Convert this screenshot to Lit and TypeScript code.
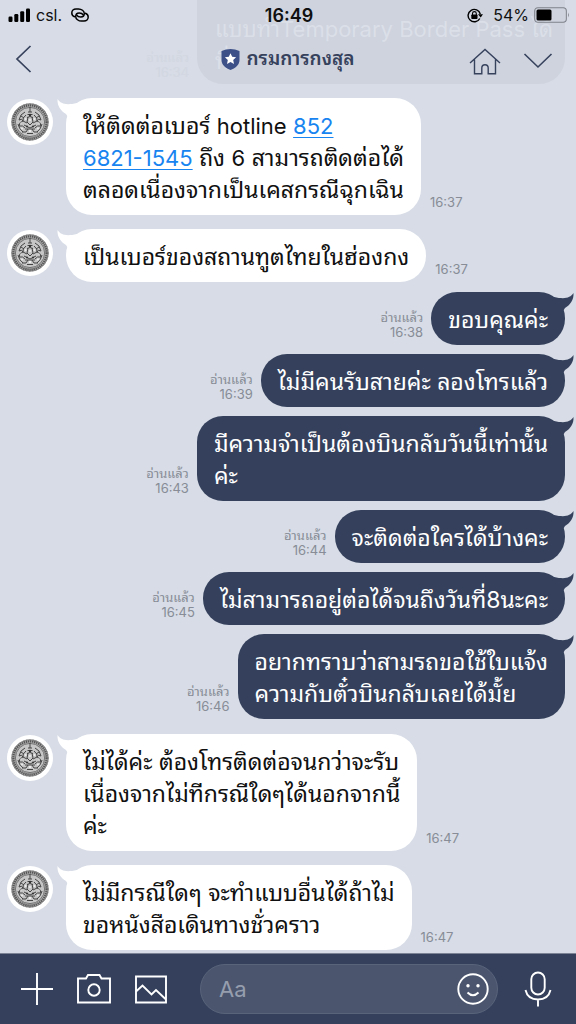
import { LitElement, html, css, nothing } from "lit";
import { customElement, property } from "lit/decorators.js";

interface Message {
  from: "them" | "me";
  lines: unknown[];
  time: string;
}

const phone = html`<a class="phone latin" href="tel:85268211545">852<br />6821-1545</a>`;

const groups: Message[][] = [
  [
    { from: "them", time: "16:37", lines: [html`ให้ติดต่อเบอร์ <span class="latin">hotline</span> ${phone} ถึง <span class="latin">6</span> สามารถติดต่อได้`, "ตลอดเนื่องจากเป็นเคสกรณีฉุกเฉิน"] },
    { from: "them", time: "16:37", lines: ["เป็นเบอร์ของสถานทูตไทยในฮ่องกง"] },
  ],
  [
    { from: "me", time: "16:38", lines: ["ขอบคุณค่ะ"] },
    { from: "me", time: "16:39", lines: ["ไม่มีคนรับสายค่ะ ลองโทรแล้ว"] },
    { from: "me", time: "16:43", lines: ["มีความจำเป็นต้องบินกลับวันนี้เท่านั้น", "ค่ะ"] },
    { from: "me", time: "16:44", lines: ["จะติดต่อใครได้บ้างคะ"] },
    { from: "me", time: "16:45", lines: ["ไม่สามารถอยู่ต่อได้จนถึงวันที่8นะคะ"] },
    { from: "me", time: "16:46", lines: ["อยากทราบว่าสามรถขอใช้ใบแจ้ง", "ความกับตั๋วบินกลับเลยได้มั้ย"] },
  ],
  [
    { from: "them", time: "16:47", lines: ["ไม่ได้ค่ะ ต้องโทรติดต่อจนกว่าจะรับ", "เนื่องจากไม่ทีกรณีใดๆได้นอกจากนี้", "ค่ะ"] },
    { from: "them", time: "16:47", lines: ["ไม่มีกรณีใดๆ จะทำแบบอื่นได้ถ้าไม่", "ขอหนังสือเดินทางชั่วคราว"] },
  ],
];

const emblem = html`<svg viewBox="0 0 46 46" width="46" height="46" role="img" aria-label="กรมการกงสุล">
  <circle cx="23" cy="23" r="23" fill="#fff" />
  <circle cx="23" cy="23" r="18.5" fill="#a9a9a9" />
  <circle cx="23" cy="23" r="18.2" fill="none" stroke="#5a5a5a" stroke-width="1" stroke-dasharray="1 .5" />
  <circle cx="23" cy="23" r="16.6" fill="none" stroke="#555" stroke-width="2.2" stroke-dasharray="1.3 0.8" />
  <circle cx="23" cy="23" r="14.6" fill="#c6c6c6" stroke="#666" stroke-width=".8" />
  <g fill="none" stroke="#444" stroke-width="1">
    <path d="M23 8v5M21 13h4M20.500 15.500h5M20 18.500q3-2 6 0M21 18l-1 5 3 3 3-3-1-5" />
    <path d="M18 13q-5 2-6 8 3-2 4 1-4 1-4 5 4-1 6 2M28 13q5 2 6 8-3-2-4 1 4 1 4 5-4-1-6 2" />
    <path d="M19 16q-4 3-3 6l4 2M27 16q4 3 3 6l-4 2M17 26l6 3 6-3M18 30h10M15 33h4l2-3M31 33h-4l-2-3M20 34.500h6" />
    <path d="M11 25q1 5 5 8M35 25q-1 5-5 8M14 17l3 2M32 17l-3 2" />
  </g>
  <g fill="#eee">
    <circle cx="18.500" cy="20" r="1" /><circle cx="27.500" cy="20" r="1" />
    <circle cx="23" cy="32" r="1.200" /><circle cx="15" cy="29.500" r=".9" /><circle cx="31" cy="29.500" r=".9" />
    <circle cx="23" cy="21" r="1" /><circle cx="14" cy="24" r=".7" /><circle cx="32" cy="24" r=".7" />
  </g>
  <g fill="#333">
    <circle cx="20" cy="27.500" r="1" /><circle cx="26" cy="27.500" r="1" /><circle cx="23" cy="16" r="1.200" />
  </g>
</svg>`;

@customElement("chat-message")
class ChatMessage extends LitElement {
  @property({ attribute: false }) message!: Message;

  static styles = css`
    :host { display: block; }
    .row { display: flex; align-items: flex-end; }
    .row.me { flex-direction: row-reverse; padding-right: 11px; gap: 8px; }
    .row.them { padding-left: 7px; gap: 9px; }
    .avatar { align-self: flex-start; margin: 0 4px 0 0; padding-top: 1px; height: 46px; }
    .avatar svg { display: block; }
    .bubble {
      position: relative; isolation: isolate; margin: 0; border-radius: 26px;
      font-size: 23px; line-height: 32px; white-space: nowrap;
    }
    .latin { font-size: 22px; line-height: 1; }
    .them .bubble { background: #fff; color: #101010; padding: 12px 17px 9px; }
    .me .bubble { background: #35415c; color: #fff; padding: 12px 17px 9px; }
    .tail { position: absolute; top: 0; z-index: -1; }
    .them .tail { left: -9px; fill: #fff; }
    .me .tail { right: -9px; fill: #35415c; }
    .phone { color: #1784f0; text-decoration: underline; text-decoration-thickness: 1px; text-underline-offset: 3px; }
    .meta { color: #878c96; font-size: 13px; line-height: 15px; padding-bottom: 5px; }
    .me .meta { text-align: right; }
    .read { display: block; }
  `;

  render() {
    const { from, lines, time } = this.message;
    return html`<div class="row ${from}">
      ${from === "them" ? html`<div class="avatar">${emblem}</div>` : nothing}
      <p class="bubble">
        ${from === "them"
          ? html`<svg class="tail" width="34" height="24" viewBox="0 0 34 24"><path d="M0.500 1C4 6 9 7.500 20 5L24 14L14 24L9 16C4 13 0 8 0.500 1Z" /></svg>`
          : html`<svg class="tail" width="34" height="24" viewBox="0 0 34 24"><path d="M33.500 1C30 6 25 7.500 14 5L10 14L20 24L25 16C30 13 34 8 33.500 1Z" /></svg>`}
        ${lines.map((line, i) => html`${i ? html`<br />` : nothing}${line}`)}
      </p>
      <div class="meta">
        ${from === "me" ? html`<span class="read">อ่านแล้ว</span>` : nothing}
        <time>${time}</time>
      </div>
    </div>`;
  }
}

@customElement("app-root")
class AppRoot extends LitElement {
  static styles = css`
    :host {
      display: flex; flex-direction: column; height: 100vh; overflow: hidden; position: relative;
      background: #d7dce6; color: #101010;
      font-family: Inter, "Noto Sans Thai Looped", Loma, Waree, Garuda, "Noto Sans Thai", "Noto Sans", "Liberation Sans", sans-serif;
    }
    svg { display: block; }
    button { border: 0; padding: 0; background: none; color: inherit; font: inherit; }
    .top { position: relative; flex: none; height: 88px; }
    .ghost {
      position: absolute; top: -26px; right: 11px; width: 368px; height: 110px; box-sizing: border-box;
      border-radius: 26px; background: #ced3de; color: #dbdfe8; padding: 39px 18px 0;
      font-size: 22px; line-height: 32px; white-space: nowrap; overflow: hidden; margin: 0;
    }
    .ghost-meta { position: absolute; top: 50px; right: 387px; color: #d2d7e1; font-size: 13px; line-height: 15px; text-align: right; }
    .status { position: relative; display: grid; grid-template-columns: 1fr auto 1fr; align-items: center; height: 30px; padding: 0 6px 0 8px; font-size: 16px; }
    .side { display: flex; align-items: center; gap: 5px; }
    .side.end { justify-content: flex-end; }
    .link { margin-left: 4px; }
    .lock { margin-right: 5px; }
    .clock { font-weight: 600; font-size: 18px; }
    .nav { position: relative; display: grid; grid-template-columns: 1fr auto 1fr; align-items: center; height: 58px; padding: 0 23px; color: #36415c; }
    .back { justify-self: start; margin-left: -8px; }
    .title { display: flex; align-items: center; gap: 6px; margin: 0; font-size: 19px; font-weight: 600; line-height: 28px; }
    .actions { display: flex; justify-content: flex-end; align-items: center; gap: 22px; padding-top: 4px; }
    .chat { flex: 1; min-height: 0; overflow: hidden; display: flex; flex-direction: column; gap: 15px; padding-top: 10px; }
    .group { display: flex; flex-direction: column; gap: 9px; }
    .group.them { gap: 14px; }
    .group.first { margin-bottom: -5px; }
    .composer {
      flex: none; display: flex; align-items: center; height: 71px; box-sizing: border-box; padding: 0 24px 0 20px;
      background: #35415c; border-top: 1px solid #7b8394; color: #fff;
    }
    .tools { display: flex; align-items: center; gap: 22px; margin-right: 32px; }
    .field {
      flex: 1; min-width: 0; display: flex; align-items: center; height: 50px; box-sizing: border-box; padding: 0 8px 0 18px;
      border: 1px solid #59647b; border-radius: 25px; background: #4b566e; margin-right: 26px;
    }
    .input { flex: 1; width: 100%; min-width: 0; border: 0; outline: 0; padding: 0; background: none; color: #fff; font: inherit; font-size: 22px; }
    .input::placeholder { color: #969eae; opacity: 1; }
  `;

  render() {
    return html`
      <header class="top">
        <p class="ghost" aria-hidden="true">แบบทำTemporary Border Pass ได้<br />ที่</p>
        <div class="ghost-meta" aria-hidden="true">อ่านแล้ว<br />16:34</div>
        <div class="status">
          <div class="side">
            <svg width="23" height="14" viewBox="0 0 23 14" fill="#000">
              <rect x="0.500" y="8.500" width="4" height="5.500" rx="1.200" /><rect x="6.300" y="6" width="4" height="8" rx="1.200" />
              <rect x="12.200" y="3.300" width="4" height="10.700" rx="1.200" /><rect x="18" y="0.500" width="4" height="13.500" rx="1.200" />
            </svg>
            <span>csl.</span>
            <svg class="link" width="18" height="14" viewBox="0 0 18 14" fill="none" stroke="#000" stroke-width="1.500" stroke-linecap="round">
              <path d="M3.600 8.800C1.800 8 .8 6.600 .8 4.900C.8 2.600 2.600 .9 5 .9H7.500C10.500 .9 13.300 3 13.300 5.600C13.300 7.600 11.800 9.100 9.800 9.100C8 9.100 6.500 8.500 5.800 7.200" />
              <path d="M14.400 5.200C16.200 6 17.200 7.400 17.200 9.100C17.200 11.400 15.400 13.100 13 13.100H10.500C7.500 13.100 4.700 11 4.700 8.400C4.700 6.400 6.200 4.900 8.200 4.900C10 4.900 11.500 5.500 12.200 6.800" />
            </svg>
          </div>
          <time class="clock">16:49</time>
          <div class="side end">
            <svg class="lock" width="16" height="15" viewBox="0 0 16 15">
              <path d="M12.800 10.500A6.200 6.200 0 1 1 13.300 6" fill="none" stroke="#000" stroke-width="1.400" />
              <path d="M11 6.300H16L13.700 9.500Z" /><rect x="4.300" y="6.500" width="6.200" height="4.500" rx=".7" />
              <path d="M5.500 7V5.500a1.900 1.900 0 0 1 3.800 0V7" fill="none" stroke="#000" stroke-width="1.100" />
            </svg>
            <span>54%</span>
            <svg width="36" height="16" viewBox="0 0 36 16">
              <rect x="0.700" y="0.700" width="31.600" height="14.600" rx="3.200" fill="none" stroke="#7f828a" stroke-width="1.100" />
              <rect x="2.500" y="2.500" width="15" height="11" rx="1.500" /><path d="M34 5.500q1.800 2.500 0 5z" fill="#7f828a" />
            </svg>
          </div>
        </div>
        <div class="nav">
          <button class="back" aria-label="Back"><svg width="17" height="28" viewBox="0 0 17 28" fill="none" stroke="currentColor" stroke-width="1.700"><path d="M15.500 1L2 14L15.500 27" /></svg></button>
          <h1 class="title">
            <svg width="19" height="21" viewBox="0 0 19 21"><path d="M0.500 2Q5 0 9.500 0T18.500 2V11C18.500 16 14 19.500 9.500 21C5 19.500 0.500 16 0.500 11Z" fill="#3d5088" /><path d="M9.500 4.200l1.700 3.600 3.900.5-2.900 2.700.8 3.900-3.500-1.900L6 14.900l.8-3.900-2.900-2.700 3.900-.5z" fill="#fff" /></svg>
            กรมการกงสุล
          </h1>
          <div class="actions">
            <button aria-label="Home"><svg width="32" height="27" viewBox="0 0 32 27" fill="none" stroke="currentColor" stroke-width="1.400"><path d="M1 15L16 1.500L31 15M5.500 11.500V25.700H12.800V20a3.200 3.200 0 0 1 6.400 0V25.700H26.500V11.500" /></svg></button>
            <button aria-label="Menu"><svg width="30" height="16" viewBox="0 0 30 16" fill="none" stroke="currentColor" stroke-width="1.600"><path d="M1.500 1L15 14L28.500 1" /></svg></button>
          </div>
        </div>
      </header>
      <main class="chat">
        ${groups.map((group, i) => html`<section class="group ${group[0].from} ${i === 0 ? "first" : ""}">
          ${group.map((message) => html`<chat-message .message=${message}></chat-message>`)}
        </section>`)}
      </main>
      <footer class="composer">
        <div class="tools">
          <button aria-label="Add"><svg width="34" height="34" viewBox="0 0 34 34" stroke="#fff" stroke-width="1.900"><path d="M17 1V33M1 17H33" /></svg></button>
          <button aria-label="Camera"><svg width="36" height="32" viewBox="0 0 36 32" fill="none" stroke="#fff" stroke-width="1.900"><path d="M2 5.500H10L12 2H23.500L25.500 5.500H34V29.500H2Z" /><circle cx="18" cy="17" r="5.700" /></svg></button>
          <button aria-label="Photos"><svg width="34" height="32" viewBox="0 0 34 32" fill="none" stroke="#fff" stroke-width="1.900"><path d="M2 3.500H32V29.500H2ZM2 18.500L8.500 12.500L17.500 21.500L22 17L32 26.500" /></svg></button>
        </div>
        <div class="field">
          <input class="input" type="text" placeholder="Aa" aria-label="Message" />
          <button aria-label="Stickers"><svg width="32" height="32" viewBox="0 0 32 32" fill="none" stroke="#fff" stroke-width="1.900"><circle cx="16" cy="16" r="14.700" /><path d="M10.500 19.500Q16 25 21.500 19.500" /><circle cx="11" cy="12.800" r="1.700" fill="#fff" stroke="none" /><circle cx="21" cy="12.800" r="1.700" fill="#fff" stroke="none" /></svg></button>
        </div>
        <button aria-label="Voice"><svg width="28" height="36" viewBox="0 0 28 36" fill="none" stroke="#fff" stroke-width="1.900"><rect x="7.300" y="1.500" width="13.400" height="22" rx="6.700" /><path d="M1.500 19C3 25.500 8 28.500 14 28.500S25 25.500 26.500 19M14 28.500V35.500" /></svg></button>
      </footer>
    `;
  }
}
